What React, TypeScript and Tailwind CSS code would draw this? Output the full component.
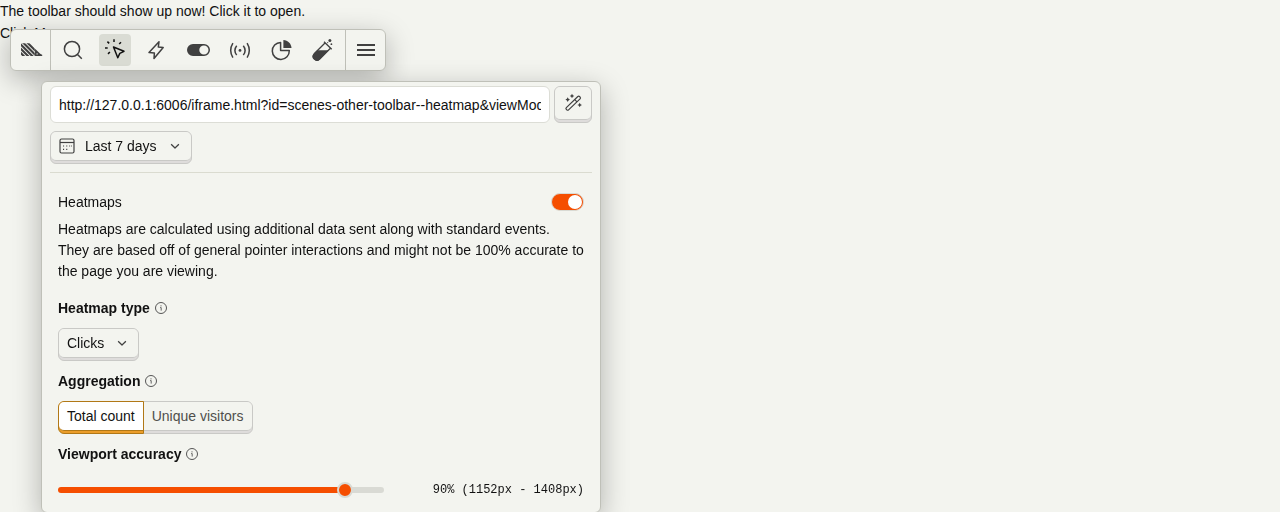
import { useState } from "react";
import type { ReactNode } from "react";

function Icon({ children, className = "size-6" }: { children: ReactNode; className?: string }) {
  return (
    <svg
      viewBox="0 0 24 24"
      className={className}
      fill="none"
      stroke="currentColor"
      strokeWidth="1.5"
      strokeLinejoin="round"
      aria-hidden="true"
    >
      {children}
    </svg>
  );
}

function Logo() {
  return (
    <svg viewBox="0 0 50 30" className="w-[22px] shrink-0" fill="currentColor" aria-hidden="true">
      <defs>
        <clipPath id="quills">
          <path d="M0 0.5H21.4L31.4 10.5V29.6H0Z" />
        </clipPath>
      </defs>
      <g clipPath="url(#quills)" stroke="currentColor" strokeWidth="4.8">
        <path d="M-4 19.4L10 33.4M-4 9.7L20 33.7M-4 0L30 34M-4 -9.7L40 34.3M6 -9.4L50 34.6" />
      </g>
      <path
        fillRule="evenodd"
        d="M42.5 23.5L33.1 14.1C32.4 13.4 31.9 13.9 31.9 14.8V29.6H47C48 29.6 48.4 29 48.4 28.5V27.4C48.4 26.8 47.5 26.4 46.9 26.3C45.3 26.1 43.7 24.8 42.5 23.5ZM36.6 26.4A1.6 1.6 0 1 1 36.6 23.2A1.6 1.6 0 0 1 36.6 26.4Z"
      />
    </svg>
  );
}

const tools: { name: string; icon: ReactNode }[] = [
  {
    name: "Inspect",
    icon: (
      <>
        <circle cx="11" cy="11" r="7.6" />
        <path d="M16.5 16.5L20.8 20.8" />
      </>
    ),
  },
  {
    name: "Heatmap",
    icon: (
      <path d="M10.5 9L21 13.3L16.8 15.4L14.8 19.8ZM11 1.3V4M16.2 6L18 4.2M4.4 3.6L6.2 5.4M2 10H4.7M5 15.9L6.9 14" />
    ),
  },
  {
    name: "Actions",
    icon: <path d="M15 3.7L5 14.5L10.4 14.9L10 20.5L19.2 9.5L14.3 9.1Z" />,
  },
  {
    name: "Feature flags",
    icon: (
      <path
        fill="currentColor"
        stroke="none"
        fillRule="evenodd"
        d="M7 6H18A6 6 0 0 1 18 18H7A6 6 0 0 1 7 6ZM17.9 7.4A4.6 4.6 0 1 0 17.9 16.6A4.6 4.6 0 0 0 17.9 7.4Z"
      />
    ),
  },
  {
    name: "Event debugger",
    icon: (
      <>
        <circle cx="12" cy="12.4" r="1.4" fill="currentColor" stroke="none" />
        <path d="M8.7 7.8Q5.1 12.4 8.7 17M15.3 7.8Q18.9 12.4 15.3 17M4.9 5.2Q0.5 12.4 4.9 19.6M19.1 5.2Q23.5 12.4 19.1 19.6" />
      </>
    ),
  },
  {
    name: "Web vitals",
    icon: (
      <>
        <path d="M11.6 4.4A8.5 8.5 0 1 0 20.3 12.6H11.6Z" />
        <path fill="currentColor" stroke="none" d="M14.4 2C18.8 2.1 22.3 5.6 22.5 10H14.4Z" />
      </>
    ),
  },
  {
    name: "Experiments",
    icon: (
      <>
        <path d="M13 3.7L20.7 11.3M14 5L3.2 15.8A3.8 3.8 0 0 0 8.5 21.2L19.4 10.2" strokeWidth="1.3" />
        <path
          fill="currentColor"
          stroke="none"
          d="M6.4 12.2H17.8L8.7 21.5A4 4 0 0 1 2.8 15.8Z"
        />
        <g fill="currentColor" stroke="none">
          <circle cx="18.9" cy="2.6" r="1.5" />
          <circle cx="20.4" cy="6.2" r="0.9" />
          <circle cx="16.7" cy="4.6" r="0.6" />
        </g>
      </>
    ),
  },
];

function Toolbar() {
  const [active, setActive] = useState("Heatmap");
  return (
    <nav
      aria-label="Toolbar"
      className="fixed top-[29px] left-2.5 flex h-[42px] rounded-md border border-[#bfc0b8] bg-[#f3f4ef] text-[#404040] shadow-[0_8px_28px_rgba(0,0,0,0.28)]"
    >
      <button aria-label="Minimize" className="flex w-10 items-center justify-end border-r border-[#bfc0b8] pr-[7px]">
        <Logo />
      </button>
      <div className="flex w-[294px] items-center justify-between px-1.5">
        {tools.map((tool) => (
          <button
            key={tool.name}
            aria-label={tool.name}
            aria-pressed={active === tool.name}
            onClick={() => setActive(tool.name)}
            className={
              active === tool.name
                ? "flex size-8 items-center justify-center rounded bg-[#dadcd4] text-[#111]"
                : "flex size-8 items-center justify-center rounded"
            }
          >
            <Icon>{tool.icon}</Icon>
          </button>
        ))}
      </div>
      <button aria-label="Menu" className="flex w-10 items-center justify-center border-l border-[#bfc0b8]">
        <Icon>
          <path d="M3 7H21M3 12H21M3 17H21" strokeWidth="2" />
        </Icon>
      </button>
    </nav>
  );
}

function Chevron() {
  return (
    <Icon className="pointer-events-none mr-2 size-4 self-center justify-self-end text-[#404040] [grid-area:1/1]">
      <path d="M6.2 9.5L12 15L17.8 9.5" strokeWidth="1.9" />
    </Icon>
  );
}

function Dropdown({ label, options, width, icon }: { label: string; options: string[]; width: string; icon?: ReactNode }) {
  return (
    <div className={`${width} rounded-md border border-[#c9c9c6] bg-[#dedcdb] pb-[3px]`}>
      <div className="-mb-px grid rounded-[5px] border-b border-[#c9c9c6] bg-[#f3f4ef]">
        <select
          aria-label={label}
          className={`h-7 w-full cursor-pointer appearance-none bg-transparent [grid-area:1/1] ${icon ? "pl-[34px]" : "pl-2"}`}
        >
          {options.map((option) => (
            <option key={option}>{option}</option>
          ))}
        </select>
        {icon}
        <Chevron />
      </div>
    </div>
  );
}

function Heading({ children, htmlFor }: { children: string; htmlFor?: string }) {
  return (
    <div className="flex h-5 items-center gap-1 font-bold">
      {htmlFor ? <label htmlFor={htmlFor}>{children}</label> : <h3>{children}</h3>}
      <svg viewBox="0 0 14 14" className="size-3.5 text-[#555]" fill="none" stroke="currentColor" aria-hidden="true">
        <circle cx="7" cy="7" r="5.5" />
        <path d="M6.1 6.6H7.2V9.6" strokeWidth="0.9" />
        <circle cx="7" cy="4.8" r="0.6" fill="currentColor" stroke="none" />
      </svg>
    </div>
  );
}

function Aggregation() {
  const [value, setValue] = useState("Total count");
  return (
    <div role="radiogroup" aria-label="Aggregation" className="flex h-[33px]">
      {["Total count", "Unique visitors"].map((option, index) => {
        const selected = value === option;
        return (
          <label
            key={option}
            className={`relative cursor-pointer border pb-0.5 ${index === 0 ? "rounded-l-md" : "rounded-r-md"} ${
              selected
                ? "z-10 border-[#b17816] bg-[#eb9d2a]"
                : "border-[#c9c9c6] bg-[#dedcdb] text-[#4f4f4c]"
            } ${index === 0 ? "" : "-ml-px"}`}
          >
            <input
              type="radio"
              name="aggregation"
              className="sr-only"
              checked={selected}
              onChange={() => setValue(option)}
            />
            <span
              className={`flex h-[29px] items-center border-b px-2 ${index === 0 ? "rounded-bl-[5px] rounded-tl-[5px]" : "rounded-r-[5px]"} ${
                selected ? "border-[#b17816] bg-white" : "border-[#c9c9c6] bg-[#f3f4ef]"
              }`}
            >
              {option}
            </span>
          </label>
        );
      })}
    </div>
  );
}

function AccuracySlider() {
  const [value, setValue] = useState(90);
  const viewport = 1280;
  const spread = 1 - value / 100;
  const low = Math.round(viewport * (1 - spread));
  const high = Math.round(viewport * (1 + spread));
  return (
    <div className="flex h-8 items-center justify-between">
      <input
        id="accuracy"
        type="range"
        min="0"
        max="100"
        value={value}
        onChange={(e) => setValue(Number(e.target.value))}
        className="h-1.5 w-[62%] cursor-pointer appearance-none rounded-full [&::-webkit-slider-thumb]:size-4 [&::-webkit-slider-thumb]:appearance-none [&::-webkit-slider-thumb]:rounded-full [&::-webkit-slider-thumb]:border-2 [&::-webkit-slider-thumb]:border-[#d9dad4] [&::-webkit-slider-thumb]:bg-[#f54e00]"
        style={{ background: `linear-gradient(to right, #f54e00 ${value - 2}%, #d9dad4 ${value - 2}%)` }}
      />
      <output htmlFor="accuracy" className="font-['Liberation_Mono',monospace] text-xs">
        {value}% ({low}px - {high}px)
      </output>
    </div>
  );
}

function HeatmapPanel() {
  const [enabled, setEnabled] = useState(true);
  return (
    <section
      aria-label="Heatmap"
      className="fixed top-[81px] left-[41px] w-[560px] max-w-full rounded-md border border-[#bfc0b8] bg-[#f3f4ef] px-2 pt-1 pb-1.5 shadow-[0_8px_28px_rgba(0,0,0,0.28)]"
    >
      <div className="flex gap-1">
        <input
          aria-label="Page URL"
          className="h-[37px] min-w-0 flex-1 rounded-md border border-[#dcddd6] bg-white px-2 outline-none"
          defaultValue="http://127.0.0.1:6006/iframe.html?id=scenes-other-toolbar--heatmap&viewMode=story"
        />
        <button
          aria-label="Match URL pattern"
          className="h-[37px] w-[38px] rounded-md border border-[#c9c9c6] bg-[#dedcdb] pb-0.5"
        >
          <span className="flex h-[33px] items-center justify-center rounded-[5px] border-b border-[#c9c9c6] bg-[#f3f4ef] text-[#404040]">
            <svg viewBox="0 0 20 20" className="size-5" fill="none" stroke="currentColor" strokeWidth="1.2" aria-hidden="true">
              <rect x="0.8" y="8.7" width="18.4" height="3.2" rx="1.2" transform="rotate(-44 10 10)" />
              <path d="M11.8 6.6L14 8.8" />
              <path
                fill="currentColor"
                stroke="none"
                d="M4.7 4.3L5.5 5.8L7 6.6L5.5 7.4L4.7 8.9L3.9 7.4L2.4 6.6L3.9 5.8ZM9 0.7L9.8 2.2L11.3 3L9.8 3.8L9 5.3L8.2 3.8L6.7 3L8.2 2.2ZM16.7 9.7L17.5 11.2L19 12L17.5 12.8L16.7 14.3L15.9 12.8L14.4 12L15.9 11.2Z"
              />
            </svg>
          </span>
        </button>
      </div>
      <div className="mt-2 border-b border-[#dadbd0] pb-2">
        <Dropdown
          label="Date range"
          width="w-[142px]"
          options={["Last 7 days", "Last 14 days", "Last 30 days"]}
          icon={
            <svg
              viewBox="0 0 20 20"
              className="pointer-events-none ml-1.5 size-5 self-center text-[#404040] [grid-area:1/1]"
              fill="none"
              stroke="currentColor"
              aria-hidden="true"
            >
              <rect x="3" y="3" width="14" height="14" rx="1.5" strokeWidth="1.2" />
              <path d="M3 6.5H17" strokeWidth="1.2" />
              <path d="M6 10H7.1M9.2 10H10.3M12 10H12.8M13.9 10H14.8M6 13.3H7.1M9.2 13.3H10.3" strokeWidth="1.2" />
            </svg>
          }
        />
      </div>
      <div className="px-2 pt-4">
        <div className="flex h-[26px] items-center justify-between">
          <label htmlFor="heatmaps">Heatmaps</label>
          <input
            id="heatmaps"
            type="checkbox"
            role="switch"
            checked={enabled}
            onChange={() => setEnabled(!enabled)}
            className="flex h-[18px] w-[33px] cursor-pointer appearance-none items-center rounded-full border border-[#d9dad4] bg-[#b5b6b0] px-px before:size-3.5 before:rounded-full before:bg-white checked:justify-end checked:bg-[#f54e00]"
          />
        </div>
        <p className="mt-1 leading-[21px]">
          Heatmaps are calculated using additional data sent along with standard events. They are based off of general
          pointer interactions and might not be 100% accurate to the page you are viewing.
        </p>
        <div className="mt-4 flex flex-col gap-2.5">
          <Heading>Heatmap type</Heading>
          <Dropdown label="Heatmap type" width="w-[81px]" options={["Clicks", "Rageclicks", "Mouse moves", "Scroll depth"]} />
          <Heading>Aggregation</Heading>
          <Aggregation />
          <Heading htmlFor="accuracy">Viewport accuracy</Heading>
          <AccuracySlider />
        </div>
      </div>
    </section>
  );
}

export default function App() {
  return (
    <div className="min-h-screen bg-[#f3f4ef] font-['Liberation_Sans',Arial,sans-serif] text-sm text-[#111]">
      <main className="leading-[22px]">
        <p>The toolbar should show up now! Click it to open.</p>
        <button>Click Me</button>
      </main>
      <Toolbar />
      <HeatmapPanel />
    </div>
  );
}
